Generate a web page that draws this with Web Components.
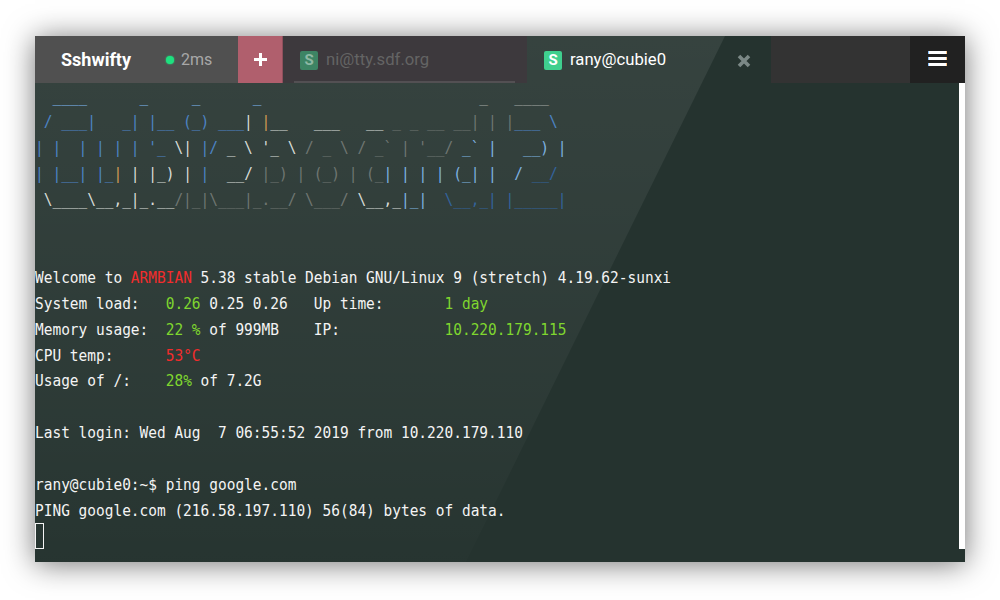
<!DOCTYPE html>
<html>
<head>
<meta charset="utf-8">
<title>Sshwifty</title>
<style>
html, body { margin: 0; height: 100%; background: #fff; }
body { padding: 36px 35px 38px; box-sizing: border-box; }
</style>
</head>
<body>
<ssh-window>
  <app-header slot="header"></app-header>
  <term-screen slot="screen"></term-screen>
</ssh-window>

<script>
class SshWindow extends HTMLElement {
    constructor() {
        super();
        this.attachShadow({mode: 'open'});
        this.shadowRoot.innerHTML = `
            <style>
                :host {
                    display: flex;
                    flex-direction: column;
                    position: relative;
                    width: 930px;
                    height: 526px;
                    background: #25332f;
                    box-shadow: 0 2px 28px rgba(0,0,0,.55);
                }
                .sheen {
                    position: absolute;
                    inset: 0;
                    background: linear-gradient(180deg, rgba(255,255,255,.08), rgba(255,255,255,.035) 70%, rgba(255,255,255,.008));
                    clip-path: polygon(0 0, 690px 0, 431px 526px, 0 526px);
                }
                .body { position: relative; display: flex; flex: 1; }
                .bar { width: 6px; height: 466px; background: #fff; margin-left: auto; }
                ::slotted([slot=header]) { position: relative; }
            </style>
            <div class="sheen"></div>
            <slot name="header"></slot>
            <div class="body">
                <slot name="screen"></slot>
                <div class="bar"></div>
            </div>
        `;
    }
}

class AppHeader extends HTMLElement {
    constructor() {
        super();
        this.attachShadow({mode: 'open'});
        this.shadowRoot.innerHTML = `
            <style>
                :host {
                    display: flex;
                    height: 47px;
                    font: 16.7px Roboto, sans-serif;
                }
                .brand {
                    display: flex;
                    align-items: center;
                    width: 203px;
                    padding-left: 26px;
                    box-sizing: border-box;
                    background: #505050;
                    color: #fff;
                }
                .brand b { font-size: 18px; font-weight: 700; width: 105px; }
                .dot {
                    width: 8px;
                    height: 8px;
                    border-radius: 50%;
                    background: #1ee07f;
                    box-shadow: 0 0 2px #1ee07f;
                    margin-right: 7px;
                }
                .ms { color: #a8a8a8; font-size: 16px; }
                .add {
                    display: flex;
                    align-items: center;
                    justify-content: center;
                    width: 45px;
                    background: #b05f6d;
                    border-right: 1px solid #8f4f5c;
                    box-sizing: border-box;
                }
                .tab {
                    display: flex;
                    align-items: center;
                    width: 244px;
                    padding-left: 17px;
                    box-sizing: border-box;
                    position: relative;
                }
                .tab.off { background: #3d393d; color: #646464; }
                .tab.off::after {
                    content: '';
                    position: absolute;
                    left: 11px;
                    right: 12px;
                    bottom: 0;
                    height: 2px;
                    background: #535053;
                }
                .tab.on { color: #fff; }
                .ico {
                    width: 18px;
                    height: 19px;
                    margin-top: 1px;
                    border-radius: 2px;
                    text-align: center;
                    line-height: 19px;
                    font-weight: 700;
                    font-size: 15px;
                    margin-right: 8px;
                }
                .off .ico { background: #3d8464; color: #8eb8a4; }
                .on .ico { background: #3fcf8e; color: #fff; }
                .close { position: absolute; left: 210px; top: 18px; }
                .gap { flex: 1; background: #333; }
                .menu {
                    display: flex;
                    flex-direction: column;
                    gap: 3px;
                    align-items: center;
                    justify-content: center;
                    width: 55px;
                    padding-bottom: 2px;
                    box-sizing: border-box;
                    background: #212121;
                }
                .menu i {
                    width: 19px;
                    height: 3px;
                    background: linear-gradient(90deg, #8cc4ff 0 1px, #fff 1px 18px, #ffc98c 18px);
                }
            </style>
            <div class="brand"><b>Sshwifty</b><span class="dot"></span><span class="ms">2ms</span></div>
            <div class="add">
                <svg width="13" height="13" viewBox="0 0 13 13"><path d="M5 0h3v5h5v3H8v5H5V8H0V5h5z" fill="#fff"/></svg>
            </div>
            <div class="tab off"><span class="ico">S</span>ni@tty.sdf.org</div>
            <div class="tab on"><span class="ico">S</span>rany@cubie0
                <svg class="close" width="14" height="14" viewBox="0 0 14 14"><path d="M2 2l10 10M12 2L2 12" stroke="#7b8886" stroke-width="3.6" fill="none"/></svg>
            </div>
            <div class="gap"></div>
            <div class="menu"><i></i><i></i><i></i></div>
        `;
    }
}

// colours of the banner, picked off the output
const B = '#4d84c4', L = '#7fb2e0', D = '#33639c', W = '#d8dcd8', G = '#6f7672', O = '#d29a55';
const R = '#f22c2c', N = '#7fd62f';

const LINES = [
    [['#7db4f2', '  ____      _     _      _   '], ['#a0a6a2', '                      _   ____']],
    [[B, ' / ___|   _| |__ (_) ___'], [W, '| '], [O, '|'], [W, '__   ___   __'], [G, ' _ _ __ __| | |'], [B, '___ \\']],
    [[B, '| |  | | | | \'_'], [W, ' \\| '], [B, '|/'], [W, ' _ \\ \'_ \\ '], [G, '/ _ \\ / _` | \'__/ '], [L, '_` |   __) |']],
    [[B, '| |__| |_'], [O, '|'], [W, ' | |_) | '], [B, '|'], [W, '  __/ '], [G, '|_) | (_) | (_'], [L, '| | | | (_| |  / '], [D, '__/']],
    [[W, ' \\____\\__,_|_.__'], [G, '/|_|\\___|_.__/ \\___/ '], [W, '\\__,_'], [L, '|_|  '], [D, '\\__,_| |_____|']],
    [],
    [],
    [['', 'Welcome to '], [R, 'ARMBIAN'], ['', ' 5.38 stable Debian GNU/Linux 9 (stretch) 4.19.62-sunxi']],
    [['', 'System load:   '], [N, '0.26'], ['', ' 0.25 0.26   Up time:       '], [N, '1 day']],
    [['', 'Memory usage:  '], [N, '22 %'], ['', ' of 999MB    IP:            '], [N, '10.220.179.115']],
    [['', 'CPU temp:      '], [R, '53°C']],
    [['', 'Usage of /:    '], [N, '28%'], ['', ' of 7.2G']],
    [],
    [['', 'Last login: Wed Aug  7 06:55:52 2019 from 10.220.179.110']],
    [],
    [['', 'rany@cubie0:~$ ping google.com']],
    [['', 'PING google.com (216.58.197.110) 56(84) bytes of data.']],
];

const esc = s => s.replace(/&/g, '&amp;').replace(/</g, '&lt;');

class TermScreen extends HTMLElement {
    constructor() {
        super();
        this.attachShadow({mode: 'open'});
        const rows = LINES.map(l =>
            '<div class="row">' + l.map(r => `<span style="color:${r[0] || 'inherit'}">${esc(r[1])}</span>`).join('') + '</div>'
        ).join('');
        this.shadowRoot.innerHTML = `
            <style>
                :host {
                    display: block;
                    color: #f4f4f4;
                    font: 16px/25.9px "DejaVu Sans Mono", monospace;
                }
                /* the terminal's font is narrower than DejaVu, so squeeze the rows */
                .rows { padding-top: .6px; margin-bottom: -.6px; transform: scaleX(.9045); transform-origin: 0 0; }
                .row { height: 25.9px; white-space: pre; }
                .cursor {
                    width: 9px;
                    height: 26px;
                    border: 1px solid #f4f4f4;
                    box-sizing: border-box;
                }
            </style>
            <div class="rows">${rows}</div>
            <div class="cursor"></div>
        `;
    }
}

customElements.define('ssh-window', SshWindow);
customElements.define('app-header', AppHeader);
customElements.define('term-screen', TermScreen);
</script>
</body>
</html>
